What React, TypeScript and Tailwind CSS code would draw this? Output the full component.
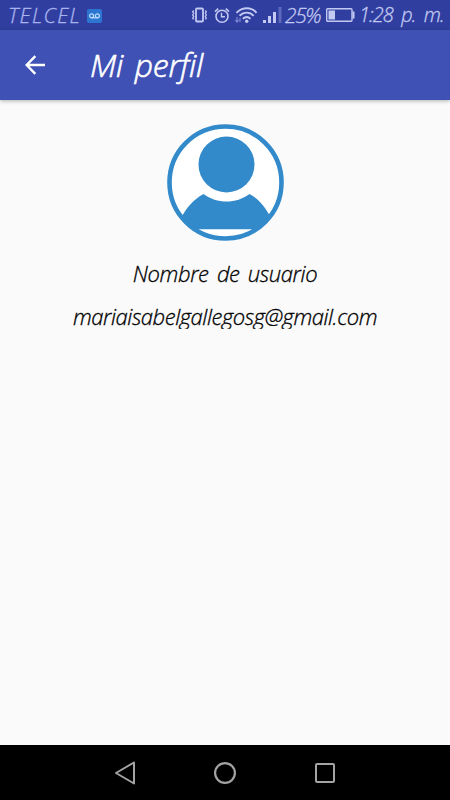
import React from 'react';

const StatusBar = () => (
  <header className="flex h-[30px] shrink-0 items-center bg-[#303f9f] pl-2 text-[19px] leading-[30px] text-[#c3c9f2]">
    <span className="w-[79px] shrink-0 whitespace-nowrap text-[21px] leading-[28px] tracking-[1.3px] text-[#aab3ee]">TELCEL</span>
    {/* Voicemail */}
    <svg className="mt-px h-[14px] w-[15px] shrink-0" viewBox="0 0 15 14" fill="none">
      <rect width="15" height="14" rx="2" fill="#2c76d2" />
      <g stroke="#b9dcff" strokeWidth="1.2">
        <circle cx="4.6" cy="6.8" r="2" />
        <circle cx="10.4" cy="6.8" r="2" />
        <path d="M4.6 8.8h5.8" />
      </g>
    </svg>
    {/* Vibrate */}
    <svg className="ml-[89px] h-[16px] w-[17px] shrink-0" viewBox="0 0 17 16" fill="none" stroke="currentColor">
      <rect x="5" y="1.5" width="7" height="13" rx="1" strokeWidth="1.8" />
      <path d="M2.7 3.5l-1 1.3 1 1.5-1 1.7 1 1.6-1 1.5 1 1.2M14.3 3.5l1 1.3-1 1.5 1 1.7-1 1.6 1 1.5-1 1.2" strokeWidth="1.3" />
    </svg>
    {/* Alarm */}
    <svg className="ml-[6px] h-[17px] w-[16px] shrink-0" viewBox="0 0 16 17" fill="none" stroke="currentColor">
      <circle cx="8" cy="9.2" r="6" strokeWidth="1.6" />
      <path d="M1 4.6l3.2-3M15 4.6l-3.2-3" strokeWidth="1.6" />
      <path d="M7.5 5.8v4h3.5" strokeWidth="1.4" />
    </svg>
    {/* Wifi */}
    <svg className="ml-[5px] h-[18px] w-[23px] shrink-0" viewBox="0 0 23 18" fill="none" stroke="currentColor">
      <path d="M1.5 6.8C7.5 .8 16.5 .8 21.5 6.8M4.5 9.8c4.3-4.2 10.2-4.2 14.2 0M7.8 12.8c2.5-2.3 5.4-2.3 7.7 0" strokeWidth="1.9" />
      <circle cx="11.7" cy="15.2" r="1.7" fill="currentColor" stroke="none" />
      <path d="M2 11v5M.3 14.2L2 16l1.7-1.8M5 16v-4" stroke="#7782cf" strokeWidth="1.3" />
    </svg>
    {/* Signal */}
    <svg className="ml-[5px] h-[16px] w-[19px] shrink-0" viewBox="0 0 19 16" fill="currentColor">
      <rect y="13" width="3" height="3" />
      <rect x="5" y="9" width="3" height="7" />
      <rect x="10" y="5" width="3" height="11" />
      <rect x="15.5" width="3" height="16" fill="#5d69bd" />
    </svg>
    <span className="ml-[3px] w-[41px] shrink-0 whitespace-nowrap text-[21px] leading-[28px] tracking-[-1.4px]">25%</span>
    {/* Battery */}
    <svg className="h-[14px] w-[29px] shrink-0" viewBox="0 0 29 14" fill="none">
      <rect x=".7" y=".7" width="25.3" height="12.6" rx="1" stroke="currentColor" strokeWidth="1.4" />
      <rect x="2.5" y="2.5" width="6.5" height="9" fill="currentColor" />
      <rect x="26.5" y="3.5" width="2" height="7" fill="currentColor" />
    </svg>
    <span className="ml-[4px] shrink-0 whitespace-nowrap text-[20px] tracking-[-0.9px] [word-spacing:4px]">1:28 p. m.</span>
  </header>
);

const Avatar = () => (
  <svg className="mt-6 h-[117px] w-[117px]" viewBox="0 0 117 117">
    <circle cx="58.5" cy="58.5" r="56" fill="#fff" />
    <path
      d="M36.5 70C27 75 19.5 83.5 14 94L30 105.3H87L104 94C98.5 83.5 92 75 82.5 70C69 80 50 80 36.5 70Z"
      fill="#338acb"
    />
    <circle cx="59.5" cy="40.5" r="28" fill="#338acb" />
    <circle cx="58.5" cy="58.5" r="56" fill="none" stroke="#338acb" strokeWidth="4.6" />
  </svg>
);

const App = () => {
  return (
    <div className="flex h-screen w-full flex-col overflow-hidden bg-[#fafafa] font-['Open_Sans',sans-serif] font-light italic [-webkit-text-stroke:0.3px_currentColor]">
      <StatusBar />

      {/* Toolbar */}
      <div className="z-10 flex h-[70px] shrink-0 items-center bg-[#3f51b5] pl-[25px] text-white shadow-[0_1px_4px_rgba(0,0,0,0.3)]">
        <svg className="h-[20px] w-[20px]" viewBox="0 0 20 20" fill="none" stroke="currentColor" strokeWidth="2.4">
          <path d="M20 10H2M10.3 1.2L1.6 10l8.7 8.8" />
        </svg>
        <h1 className="ml-[45px] whitespace-nowrap text-[32px] leading-[70px] tracking-[-0.3px] [word-spacing:4px] [-webkit-text-stroke:0.6px_currentColor]">Mi perfil</h1>
      </div>

      <main className="flex grow flex-col items-center text-black">
        <Avatar />
        <p className="mt-[16px] h-[33px] whitespace-nowrap text-[22px] leading-[33px] tracking-[-0.4px] [word-spacing:3px]">Nombre de usuario</p>
        <p className="mt-[10px] h-[29px] overflow-hidden whitespace-nowrap text-[22px] leading-[33px] tracking-[-0.43px]">mariaisabelgallegosg@gmail.com</p>
      </main>

      {/* Navigation bar */}
      <nav className="flex h-[55px] shrink-0 items-center bg-black pl-[114px] text-[#a3a3a3]">
        <svg className="h-[24px] w-[22px]" viewBox="0 0 22 24" fill="none" stroke="currentColor" strokeWidth="2" strokeLinejoin="round">
          <path d="M20 1.5v21L2 12z" />
        </svg>
        <svg className="ml-[78px] h-[22px] w-[22px]" viewBox="0 0 22 22" fill="none" stroke="currentColor" strokeWidth="2.2">
          <circle cx="11" cy="11" r="9.9" />
        </svg>
        <svg className="ml-[79px] h-[20px] w-[20px]" viewBox="0 0 20 20" fill="none" stroke="currentColor" strokeWidth="2">
          <rect x="1" y="1" width="18" height="18" rx="1" />
        </svg>
      </nav>
    </div>
  );
};

export default App;
